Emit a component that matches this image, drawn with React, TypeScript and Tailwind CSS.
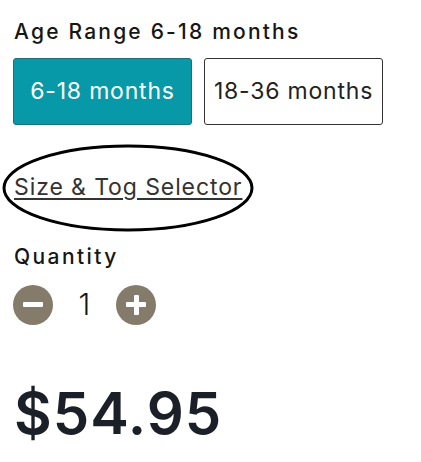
export default function App() {
  return (
    <div className="h-[462px] w-[421px] bg-white text-[#161616]" style={{ fontFamily: 'Inter, "DejaVu Sans", sans-serif' }}>
      <div className="px-[14px] pt-[18px]">
        <h2 className="text-[21px] leading-[28px] font-medium tracking-[2.2px]">Age Range 6-18 months</h2>

        <div className="mt-[12px] flex gap-[12px] -ml-[1px]">
          <button className="flex h-[67px] w-[179px] items-center justify-center rounded-[3px] border border-[#1f6f78] bg-[#0899a8] text-[23px] tracking-[0.8px] text-white">
            6-18 months
          </button>
          <button className="flex h-[67px] w-[179px] items-center justify-center rounded-[3px] border border-[#333] bg-white text-[23px] tracking-[0.8px] text-[#222]">
            18-36 months
          </button>
        </div>

        <div className="relative mt-[18px] h-[88px]">
          <svg className="absolute -left-[12px] top-0" width="254" height="90" viewBox="0 0 254 90">
            <ellipse cx="126" cy="45" rx="124" ry="42" fill="none" stroke="#000" strokeWidth="3" />
          </svg>
          <a className="relative top-[27px] text-[23px] tracking-[0.9px] text-[#333] underline underline-offset-[3px] decoration-[2px]">
            Size &amp; Tog Selector
          </a>
        </div>

        <div className="mt-[13px] text-[21px] leading-[26px] font-medium tracking-[2.4px]">Quantity</div>

        <div className="mt-[12px] flex items-center -ml-[1px]">
          <div className="flex h-[40px] w-[40px] items-center justify-center rounded-full bg-[#857b6b]">
            <div className="h-[5px] w-[20px] rounded-[1px] bg-white" />
          </div>
          <div className="w-[63px] text-center text-[30px] font-light">1</div>
          <div className="relative flex h-[40px] w-[40px] items-center justify-center rounded-full bg-[#857b6b]">
            <div className="h-[5px] w-[20px] rounded-[1px] bg-white" />
            <div className="absolute h-[20px] w-[5px] rounded-[1px] bg-white" />
          </div>
        </div>

        <div className="mt-[54px] text-[58px] leading-[64px] font-semibold tracking-[1px] text-[#1b1f27]">$54.95</div>
      </div>
    </div>
  );
}
